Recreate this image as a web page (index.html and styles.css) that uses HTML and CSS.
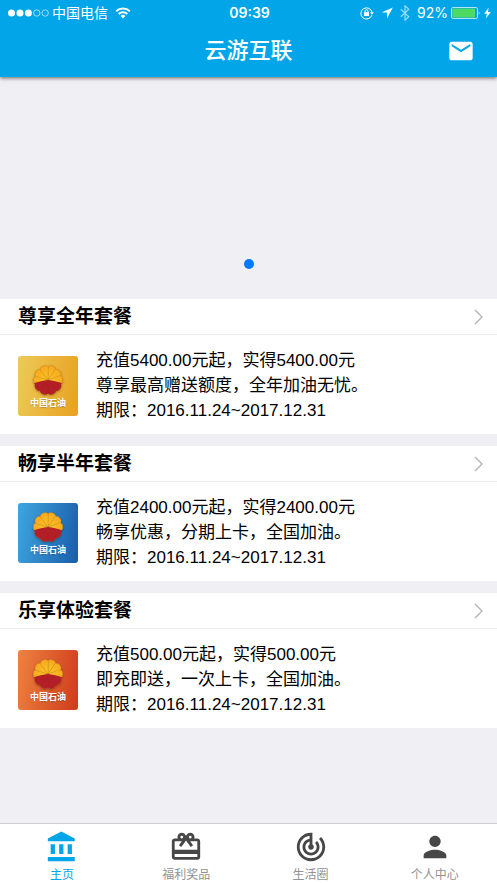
FILE: index.html
```
<!DOCTYPE html>
<html lang="zh-CN">
<head>
    <meta charset="UTF-8">
    <meta name="viewport" content="width=device-width, initial-scale=1.0">
    <title>云游互联</title>
    <link rel="stylesheet" href="styles.css">
</head>
<body>

    <!-- shared logo shape, used by the three cards -->
    <svg class="defs" width="0" height="0" aria-hidden="true">
        <defs>
            <path id="petal" d="M0 0L-4.3-12A4.4 3.6 0 0 1 4.3-12Z"/>
            <g id="flower">
                <use href="#petal" transform="rotate(18)"/>
                <use href="#petal" transform="rotate(54)"/>
                <use href="#petal" transform="rotate(90)"/>
                <use href="#petal" transform="rotate(126)"/>
                <use href="#petal" transform="rotate(162)"/>
                <use href="#petal" transform="rotate(198)"/>
                <use href="#petal" transform="rotate(234)"/>
                <use href="#petal" transform="rotate(270)"/>
                <use href="#petal" transform="rotate(306)"/>
                <use href="#petal" transform="rotate(342)"/>
            </g>
            <clipPath id="lower"><path d="M-18 5Q0-4 18 5V18H-18Z"/></clipPath>
            <linearGradient id="gold" x1="0" y1="0" x2="0" y2="1">
                <stop offset="0" stop-color="#f6a81c"/>
                <stop offset="1" stop-color="#fcc62a"/>
            </linearGradient>
            <symbol id="logo" viewBox="-18 -18 36 36">
                <use class="petals" href="#flower"/>
                <g clip-path="url(#lower)"><use class="base" href="#flower"/></g>
            </symbol>
        </defs>
    </svg>

    <header class="header">
        <div class="status-bar">
            <div class="status-left">
                <svg width="41" height="10" viewBox="0 0 41 10">
                    <circle cx="3.5" cy="5" r="3.5" fill="#fff"/>
                    <circle cx="12" cy="5" r="3.5" fill="#fff"/>
                    <circle cx="20.4" cy="5" r="3.5" fill="#fff"/>
                    <circle cx="28.8" cy="5" r="3.2" fill="none" stroke="#fff" stroke-width=".6"/>
                    <circle cx="37.2" cy="5" r="3.2" fill="none" stroke="#fff" stroke-width=".6"/>
                </svg>
                <span>中国电信</span>
                <svg class="wifi" width="16" height="12" viewBox="0 0 16 12" fill="none" stroke="#fff" stroke-width="1.9">
                    <path d="M1.2 4.3a9.8 9.8 0 0 1 13.6 0M3.7 7a6.2 6.2 0 0 1 8.6 0"/>
                    <path d="M8 11.5L5.6 9a3.5 3.5 0 0 1 4.8 0Z" fill="#fff" stroke="none"/>
                </svg>
            </div>
            <time class="clock">09:39</time>
            <div class="status-right">
                <svg width="14" height="14" viewBox="0 0 14 14" fill="none" stroke="#fff">
                    <path d="M11.8 9.2A5.6 5.6 0 1 1 12 6.5"/>
                    <path d="M10.2 6.3h3.6L12 8.8Z" fill="#fff" stroke="none"/>
                    <rect x="4" y="6.2" width="5" height="3.8" fill="#fff" stroke="none"/>
                    <path d="M5 6.5V5.3a1.5 1.5 0 0 1 3 0v1.2"/>
                </svg>
                <svg width="12" height="12" viewBox="0 0 12 12"><path d="M11.8 .6L.6 5.6h5.4v5.8Z" fill="#fff"/></svg>
                <svg class="bluetooth" width="10" height="16" viewBox="0 0 10 16" fill="none" stroke="#fff" stroke-width="1.2"><path d="M.8 4.3l8 7.4L5 15.2V.8l3.8 3.5-8 7.4"/></svg>
                <span class="percent">92%</span>
                <svg class="battery" width="30" height="14" viewBox="0 0 30 14">
                    <rect x=".5" y="1.5" width="26" height="11" rx="1.6" fill="none" stroke="#fff" stroke-opacity=".7"/>
                    <rect x="1.4" y="2.4" width="22.6" height="9.2" rx=".6" fill="#4cd964"/>
                    <path d="M27.8 5.2q1.6 1.8 0 3.6Z" fill="#fff"/>
                </svg>
                <svg width="7" height="12" viewBox="0 0 7 12"><path d="M4.6 .4L.3 6.7h2.6L1.9 11.6 6.8 4.9H4Z" fill="#fff"/></svg>
            </div>
        </div>
        <div class="nav">
            <h1>云游互联</h1>
            <button class="mail" aria-label="消息">
                <svg width="28" height="28" viewBox="0 0 24 24"><path d="M20 4H4c-1.1 0-2 .9-2 2v12c0 1.1.9 2 2 2h16c1.1 0 2-.9 2-2V6c0-1.1-.9-2-2-2zm0 4l-8 5-8-5V6l8 5 8-5v2z"/></svg>
            </button>
        </div>
    </header>

    <main class="content">
        <div class="banner">
            <button class="bullet" aria-label="1"></button>
        </div>

        <section class="card">
            <a href="#" class="card-title">
                <h2>尊享全年套餐</h2>
                <svg class="arrow" width="9" height="16" viewBox="0 0 9 16"><path d="M1 1l7 7-7 7"/></svg>
            </a>
            <div class="card-body">
                <div class="thumb yellow">
                    <svg width="36" height="36"><use href="#logo"/></svg>
                    <span>中国石油</span>
                </div>
                <div class="info">
                    <p>充值5400.00元起，实得5400.00元</p>
                    <p>尊享最高赠送额度，全年加油无忧。</p>
                    <p>期限：2016.11.24~2017.12.31</p>
                </div>
            </div>
        </section>

        <section class="card">
            <a href="#" class="card-title">
                <h2>畅享半年套餐</h2>
                <svg class="arrow" width="9" height="16" viewBox="0 0 9 16"><path d="M1 1l7 7-7 7"/></svg>
            </a>
            <div class="card-body">
                <div class="thumb blue">
                    <svg width="36" height="36"><use href="#logo"/></svg>
                    <span>中国石油</span>
                </div>
                <div class="info">
                    <p>充值2400.00元起，实得2400.00元</p>
                    <p>畅享优惠，分期上卡，全国加油。</p>
                    <p>期限：2016.11.24~2017.12.31</p>
                </div>
            </div>
        </section>

        <section class="card">
            <a href="#" class="card-title">
                <h2>乐享体验套餐</h2>
                <svg class="arrow" width="9" height="16" viewBox="0 0 9 16"><path d="M1 1l7 7-7 7"/></svg>
            </a>
            <div class="card-body">
                <div class="thumb red">
                    <svg width="36" height="36"><use href="#logo"/></svg>
                    <span>中国石油</span>
                </div>
                <div class="info">
                    <p>充值500.00元起，实得500.00元</p>
                    <p>即充即送，一次上卡，全国加油。</p>
                    <p>期限：2016.11.24~2017.12.31</p>
                </div>
            </div>
        </section>
    </main>

    <nav class="tabs">
        <a href="#" class="tab active">
            <svg width="34" height="34" viewBox="0 0 24 24"><path d="M4 10v7h3v-7H4zm6 0v7h3v-7h-3zM2 22h19v-3H2v3zm14-12v7h3v-7h-3zM11.5 1L2 6v2h19V6l-9.5-5z"/></svg>
            <span>主页</span>
        </a>
        <a href="#" class="tab">
            <svg width="34" height="34" viewBox="0 0 24 24"><path d="M20 6h-2.18c.11-.31.18-.65.18-1 0-1.66-1.34-3-3-3-1.05 0-1.96.54-2.5 1.35l-.5.67-.5-.68C10.96 2.54 10.05 2 9 2 7.34 2 6 3.34 6 5c0 .35.07.69.18 1H4c-1.11 0-1.99.89-1.99 2L2 19c0 1.11.89 2 2 2h16c1.11 0 2-.89 2-2V8c0-1.11-.89-2-2-2zm-5-2c.55 0 1 .45 1 1s-.45 1-1 1-1-.45-1-1 .45-1 1-1zM9 4c.55 0 1 .45 1 1s-.45 1-1 1-1-.45-1-1 .45-1 1-1zm11 15H4v-2h16v2zm0-5H4V8h5.08L7 10.83 8.62 12 11 8.76l1-1.36 1 1.36L15.38 12 17 10.83 14.92 8H20v6z"/></svg>
            <span>福利奖品</span>
        </a>
        <a href="#" class="tab">
            <svg width="34" height="34" viewBox="0 0 24 24"><path d="M19.07 4.93l-1.41 1.41C19.1 7.79 20 9.79 20 12c0 4.42-3.58 8-8 8s-8-3.58-8-8c0-4.08 3.05-7.44 7-7.93v2.02C8.16 6.57 6 9.03 6 12c0 3.31 2.69 6 6 6s6-2.69 6-6c0-1.66-.67-3.16-1.76-4.24l-1.41 1.41C15.55 9.9 16 10.9 16 12c0 2.21-1.79 4-4 4s-4-1.79-4-4c0-1.86 1.28-3.41 3-3.86v2.14c-.6.35-1 .98-1 1.72 0 1.1.9 2 2 2s2-.9 2-2c0-.74-.4-1.38-1-1.72V2h-1C6.48 2 2 6.48 2 12s4.48 10 10 10 10-4.48 10-10c0-2.76-1.12-5.26-2.93-7.07z"/></svg>
            <span>生活圈</span>
        </a>
        <a href="#" class="tab">
            <svg width="34" height="34" viewBox="0 0 24 24"><path d="M12 12c2.21 0 4-1.79 4-4s-1.79-4-4-4-4 1.79-4 4 1.79 4 4 4zm0 2c-2.67 0-8 1.34-8 4v2h16v-2c0-2.66-5.33-4-8-4z"/></svg>
            <span>个人中心</span>
        </a>
    </nav>

</body>
</html>
```
FILE: styles.css
```
* {
    box-sizing: border-box;
}

body {
    margin: 0;
    min-height: 100vh;
    display: flex;
    flex-direction: column;
    background-color: #efeff4;
    color: #000000;
    font-family: "Liberation Sans", "Noto Sans CJK SC", sans-serif;
}

h1, h2, p {
    margin: 0;
}

a {
    text-decoration: none;
}

svg {
    display: block;
    flex-shrink: 0;
}

.defs {
    position: absolute;
}

/* header */
.header {
    background-color: #02a6e8;
    color: #ffffff;
    box-shadow: 0 1px 4px rgba(0, 0, 0, 0.6);
}

.status-bar {
    display: grid;
    grid-template-columns: 1fr auto 1fr;
    align-items: center;
    height: 26px;
    padding: 0 6px 0 8px;
    font-family: Inter, "Noto Sans CJK SC", sans-serif;
    font-size: 14px;
    line-height: 20px;
}

.status-left,
.status-right {
    display: flex;
    align-items: center;
}

.status-left {
    gap: 3px;
}

.wifi {
    margin-left: 4px;
}

.clock {
    font-weight: 600;
}

.status-right {
    justify-content: flex-end;
    gap: 7px;
}

.bluetooth {
    opacity: 0.6;
}

.battery {
    margin: 0 -4px;
}

.nav {
    display: grid;
    grid-template-columns: 1fr auto 1fr;
    align-items: center;
    height: 51px;
    padding: 0 22px 1px;
}

.nav h1 {
    grid-column: 2;
    font-size: 22px;
    font-weight: 500;
    line-height: 32px;
}

.mail {
    justify-self: end;
    padding: 0;
    border: 0;
    background: none;
    fill: #ffffff;
    cursor: pointer;
}

/* content */
.content {
    flex: 1;
}

.banner {
    display: flex;
    justify-content: center;
    align-items: flex-end;
    height: 210px;
    margin-bottom: 12px;
    padding-bottom: 18px;
}

.bullet {
    width: 10px;
    height: 10px;
    padding: 0;
    border: 0;
    border-radius: 50%;
    background-color: #007aff;
}

.card {
    margin-bottom: 12px;
    background-color: #ffffff;
}

.card-title {
    display: flex;
    justify-content: space-between;
    align-items: center;
    height: 36px;
    padding: 1px 14px 0 18px;
    border-bottom: 1px solid #ececec;
    color: #000000;
}

.card-title h2 {
    font-size: 19px;
    font-weight: 700;
    line-height: 28px;
}

.arrow {
    fill: none;
    stroke: #b2b2b2;
    stroke-width: 1.3;
}

.card-body {
    display: flex;
    align-items: center;
    gap: 18px;
    padding: 13px 18px 11px;
}

.thumb {
    display: flex;
    flex-direction: column;
    align-items: center;
    flex-shrink: 0;
    width: 60px;
    height: 60px;
    padding-top: 6px;
    border-radius: 3px;
    color: #ffffff;
    font-size: 9px;
    font-weight: 700;
    line-height: 10px;
    text-shadow: 0 1px 1px rgba(0, 0, 0, 0.2);
}

.thumb svg {
    filter: drop-shadow(0 1px 1px rgba(0, 0, 0, 0.3));
}

.yellow {
    background: linear-gradient(100deg, #edca59, #e8a11f);
}

.blue {
    background: linear-gradient(100deg, #3fa6de, #195dab);
}

.red {
    background: linear-gradient(100deg, #ee8240, #cf3b1c);
}

.petals {
    fill: url(#gold);
    stroke: #c98018;
    stroke-width: 0.4;
}

.base {
    fill: #b21f27;
    stroke: #b21f27;
    stroke-width: 0.6;
}

.info {
    font-size: 17px;
    line-height: 25px;
}

/* bottom tabs */
.tabs {
    display: flex;
    height: 60px;
    border-top: 1px solid #cfcfd2;
    background-color: #ffffff;
}

.tab {
    display: flex;
    flex: 1;
    flex-direction: column;
    align-items: center;
    gap: 3px;
    padding-top: 6px;
    color: #929292;
    fill: #474747;
    font-size: 12px;
    line-height: 16px;
}

.active {
    color: #02a6e8;
    fill: #02a6e8;
}
```
